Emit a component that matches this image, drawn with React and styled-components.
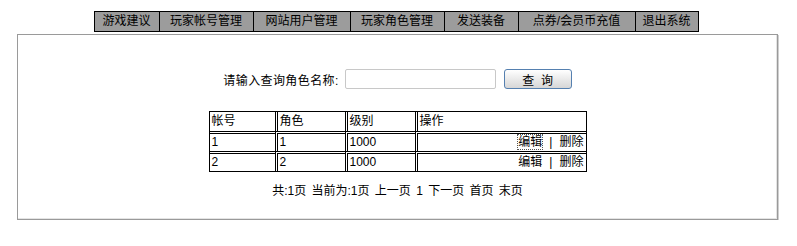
import React from "react";
import styled, { createGlobalStyle } from "styled-components";

const GlobalStyle = createGlobalStyle`
	body {
		margin: 0;
		background: #ffffff;
		font-family: "Liberation Sans", "Noto Sans CJK SC", sans-serif;
		font-size: 12px;
		color: #000000;
	}
`;

const menuItems = [
	{ label: "游戏建议", width: 65 },
	{ label: "玩家帐号管理", width: 94 },
	{ label: "网站用户管理", width: 97 },
	{ label: "玩家角色管理", width: 94 },
	{ label: "发送装备", width: 74 },
	{ label: "点券/会员币充值", width: 117 },
	{ label: "退出系统", width: 63 },
];

const rows = [
	{ account: "1", role: "1", level: "1000", focused: true },
	{ account: "2", role: "2", level: "1000", focused: false },
];

export default function App() {
	return (
		<>
			<GlobalStyle />
			<Page>
				<Menu>
					{menuItems.map((item) => (
						<MenuItem key={item.label} $width={item.width}>
							{item.label}
						</MenuItem>
					))}
				</Menu>
				<Panel>
					<SearchRow>
						<Label>请输入查询角色名称:</Label>
						<Input type="text" />
						<Button>查&nbsp;&nbsp;询</Button>
					</SearchRow>
					<Table>
						<colgroup>
							<Col $w={65} />
							<Col $w={70} />
							<Col $w={70} />
							<Col />
						</colgroup>
						<tbody>
							<tr>
								<Cell>帐号</Cell>
								<Cell>角色</Cell>
								<Cell>级别</Cell>
								<Cell>操作</Cell>
							</tr>
							{rows.map((r) => (
								<tr key={r.account}>
									<Cell>{r.account}</Cell>
									<Cell>{r.role}</Cell>
									<Cell>{r.level}</Cell>
									<Cell $right>
										<Link $focused={r.focused}>编辑</Link>
										<Sep>|</Sep>
										<Link>删除</Link>
									</Cell>
								</tr>
							))}
						</tbody>
					</Table>
					<Pager>共:1页 当前为:1页 上一页 1 下一页 首页 末页</Pager>
				</Panel>
			</Page>
		</>
	);
}

const Page = styled.div`
	width: 797px;
	padding-top: 11px;
	display: flex;
	flex-direction: column;
	align-items: center;
`;

const Menu = styled.div`
	display: flex;
	border-left: 1px solid #000;
	margin-left: -5px;
`;

const MenuItem = styled.div`
	width: ${(p) => p.$width}px;
	height: 21px;
	box-sizing: border-box;
	border: 1px solid #000;
	border-left: none;
	background: #9c9c9c;
	display: flex;
	align-items: center;
	justify-content: center;
	font-size: 12px;
	line-height: 19px;
`;

const Panel = styled.div`
	margin-top: 2px;
	width: 761px;
	height: 186px;
	box-sizing: border-box;
	border: 1px solid #9a9a9a;
	box-shadow: inset -1px -1px 0 #e4e4e4, 1px 1px 0 #cfcfcf;
	margin-left: -2px;
	display: flex;
	flex-direction: column;
	align-items: center;
	padding-top: 34px;
`;

const SearchRow = styled.div`
	display: flex;
	align-items: center;
	gap: 6px;
`;

const Label = styled.span`
	font-size: 12px;
	letter-spacing: 0.4px;
	color: #000;
`;

const Input = styled.input`
	width: 151px;
	height: 20px;
	box-sizing: border-box;
	border: 1px solid #c8c8c8;
	border-radius: 2px;
	padding: 0 3px;
	margin: 0;
	outline: none;
`;

const Button = styled.button`
	margin-left: 2px;
	width: 68px;
	height: 20px;
	box-sizing: border-box;
	border: 1px solid #5580b0;
	border-radius: 3px;
	background: linear-gradient(#ffffff, #e6e6e6 60%, #d6d6d6);
	font-family: "Liberation Sans", "Noto Sans CJK SC", sans-serif;
	font-size: 12px;
	padding: 0;
	color: #000;
`;

const Table = styled.table`
	margin-top: 22px;
	width: 378px;
	table-layout: fixed;
	border: 1px solid #000;
	border-collapse: separate;
	border-spacing: 0;
`;

const Col = styled.col`
	width: ${(p) => (p.$w ? `${p.$w}px` : "auto")};
`;

const Cell = styled.td`
	height: 17px;
	padding: 0 2px;
	font-size: 12px;
	line-height: 17px;
	text-align: ${(p) => (p.$right ? "right" : "left")};
	border-left: 3px double #000;
	border-top: 3px double #000;
	white-space: nowrap;
	overflow: hidden;

	&:first-child {
		border-left: none;
	}

	tr:first-child > & {
		border-top: none;
		height: 19px;
	}
`;

const Link = styled.span`
	outline: ${(p) => (p.$focused ? "1px dotted #555" : "none")};
`;

const Sep = styled.span`
	margin: 0 7px;
	color: #000;
`;

const Pager = styled.div`
	margin-top: 9px;
	font-size: 12px;
	word-spacing: 2px;
`;
